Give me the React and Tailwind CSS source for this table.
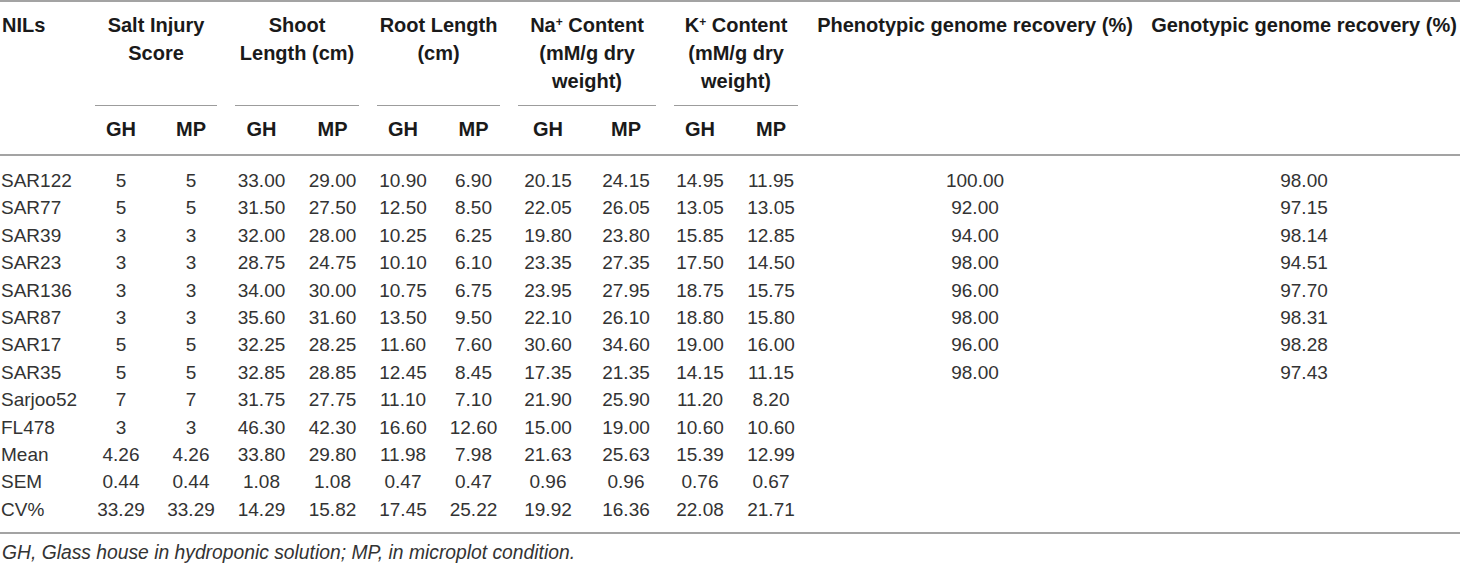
import React from "react";

const rows = [
  ["SAR122", "5", "5", "33.00", "29.00", "10.90", "6.90", "20.15", "24.15", "14.95", "11.95", "100.00", "98.00"],
  ["SAR77", "5", "5", "31.50", "27.50", "12.50", "8.50", "22.05", "26.05", "13.05", "13.05", "92.00", "97.15"],
  ["SAR39", "3", "3", "32.00", "28.00", "10.25", "6.25", "19.80", "23.80", "15.85", "12.85", "94.00", "98.14"],
  ["SAR23", "3", "3", "28.75", "24.75", "10.10", "6.10", "23.35", "27.35", "17.50", "14.50", "98.00", "94.51"],
  ["SAR136", "3", "3", "34.00", "30.00", "10.75", "6.75", "23.95", "27.95", "18.75", "15.75", "96.00", "97.70"],
  ["SAR87", "3", "3", "35.60", "31.60", "13.50", "9.50", "22.10", "26.10", "18.80", "15.80", "98.00", "98.31"],
  ["SAR17", "5", "5", "32.25", "28.25", "11.60", "7.60", "30.60", "34.60", "19.00", "16.00", "96.00", "98.28"],
  ["SAR35", "5", "5", "32.85", "28.85", "12.45", "8.45", "17.35", "21.35", "14.15", "11.15", "98.00", "97.43"],
  ["Sarjoo52", "7", "7", "31.75", "27.75", "11.10", "7.10", "21.90", "25.90", "11.20", "8.20", "", ""],
  ["FL478", "3", "3", "46.30", "42.30", "16.60", "12.60", "15.00", "19.00", "10.60", "10.60", "", ""],
  ["Mean", "4.26", "4.26", "33.80", "29.80", "11.98", "7.98", "21.63", "25.63", "15.39", "12.99", "", ""],
  ["SEM", "0.44", "0.44", "1.08", "1.08", "0.47", "0.47", "0.96", "0.96", "0.76", "0.67", "", ""],
  ["CV%", "33.29", "33.29", "14.29", "15.82", "17.45", "25.22", "19.92", "16.36", "22.08", "21.71", "", ""],
];

const widths = ["w-[86px]", "w-[70px]", "w-[70px]", "w-[71px]", "w-[71px]", "w-[70px]", "w-[71px]", "w-[78px]", "w-[78px]", "w-[70px]", "w-[72px]", "w-[336px]", "w-[317px]"];

function Group({ children }) {
  return (
    <th colSpan={2} className="px-[9px] pt-[9px] align-top font-bold">
      <div className="h-[84px] leading-[28px] text-center">{children}</div>
      <div className="mt-[10px] h-px bg-[#9c9c9c]" />
    </th>
  );
}

export default function App() {
  const sub = ["GH", "MP", "GH", "MP", "GH", "MP", "GH", "MP", "GH", "MP"];

  return (
    <div className="w-[1460px] h-[565px] bg-white overflow-hidden font-['Liberation_Sans',Arial,sans-serif]">
      <table className="table-fixed border-collapse w-[1460px]">
        <colgroup>
          {widths.map((w, i) => (
            <col key={i} className={w} />
          ))}
        </colgroup>
        <thead className="border-t-2 border-b-2 border-[#a3a3a3] text-[20px] text-[#1a1a1a]">
          <tr>
            <th rowSpan={2} className="pt-[9px] pl-[2px] align-top text-left font-bold leading-[28px]">NILs</th>
            <Group>Salt Injury<br />Score</Group>
            <Group>Shoot<br />Length (cm)</Group>
            <Group>Root Length<br />(cm)</Group>
            <Group>
              Na<sup className="text-[12px]">+</sup> Content<br />(mM/g dry<br />weight)
            </Group>
            <Group>
              K<sup className="text-[12px]">+</sup> Content<br />(mM/g dry<br />weight)
            </Group>
            <th rowSpan={2} className="pt-[9px] align-top text-center font-bold leading-[28px] whitespace-nowrap">
              Phenotypic genome recovery (%)
            </th>
            <th rowSpan={2} className="pt-[9px] pl-[5px] align-top text-center font-bold leading-[28px] whitespace-nowrap">
              Genotypic genome recovery (%)
            </th>
          </tr>
          <tr>
            {sub.map((s, i) => (
              <th key={i} className="pt-[9px] pb-[11px] text-center font-bold leading-[28px]">{s}</th>
            ))}
          </tr>
        </thead>
        <tbody className="border-b-2 border-[#a3a3a3] text-[19px] text-[#333333]">
          {rows.map((r, ri) => {
            const first = ri === 0;
            const last = ri === rows.length - 1;
            const pad = first ? "pt-[11px]" : last ? "pb-[9px]" : "";
            return (
              <tr key={ri}>
                {r.map((c, ci) => (
                  <td
                    key={ci}
                    className={
                      "leading-[27.4px] whitespace-nowrap " +
                      pad +
                      (ci === 0 ? " text-left pl-[1px]" : " text-center") +
                      (ci === 12 ? " pl-[5px]" : "")
                    }
                  >
                    {c}
                  </td>
                ))}
              </tr>
            );
          })}
        </tbody>
      </table>
      <p className="pt-[7px] pl-[2px] text-[19.3px] leading-[24px] italic text-[#333333]">
        GH, Glass house in hydroponic solution; MP, in microplot condition.
      </p>
    </div>
  );
}
